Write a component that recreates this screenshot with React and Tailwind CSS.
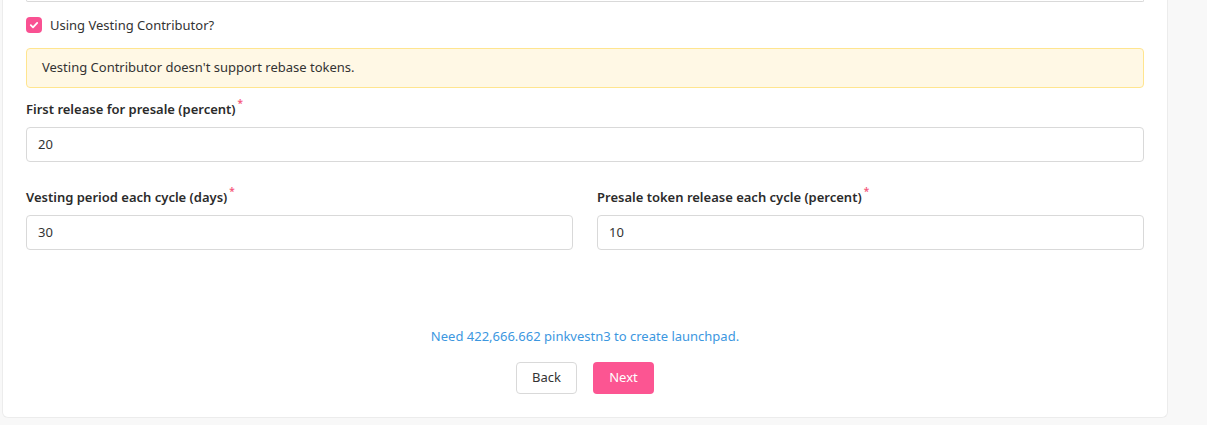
import React, { useState } from 'react';

const Label = ({ children }) => (
    <label className="flex items-start text-[13px] font-semibold text-[#2b2b2b] leading-[20px]">
        {children}
        <span className="ml-[2px] -mt-[3px] text-[10px] text-[#f5587b] leading-[14px]">*</span>
    </label>
);

const Field = ({ label, value }) => (
    <div className="flex flex-col">
        <Label>{label}</Label>
        <div className="mt-[8px] h-[35px] rounded-[4px] border border-[#d9d9d9] bg-white px-[11px] flex items-center text-[13px] text-[#333]">
            {value}
        </div>
    </div>
);

const App = () => {
    const [useVesting, setUseVesting] = useState(true);

    return (
        <div className="w-[1207px] h-[425px] overflow-hidden bg-[#f8f8f8]" style={{ fontFamily: '"Noto Sans", "Open Sans", sans-serif' }}>
            <div className="ml-[2px] w-[1166px] h-[418px] bg-white border-x border-b border-[#ececec] rounded-b-[6px] px-[23px]">
                {/* bottom of previous input */}
                <div className="h-[2px] border-x border-b border-[#d9d9d9] rounded-b-[4px]" />

                <div className="mt-[13px] flex items-center gap-[8px]">
                    <button
                        onClick={() => setUseVesting(!useVesting)}
                        className={`h-[16px] w-[16px] rounded-[4px] flex items-center justify-center ${useVesting ? 'bg-[#f95192]' : 'border border-[#d9d9d9] bg-white'}`}
                    >
                        {useVesting && (
                            <svg width="10" height="10" viewBox="0 0 10 10" fill="none">
                                <path d="M1.8 5.2 L4 7.3 L8.2 2.9" stroke="white" strokeWidth="1.8" strokeLinecap="round" strokeLinejoin="round" />
                            </svg>
                        )}
                    </button>
                    <span className="text-[13px] text-[#333] leading-[20px]">Using Vesting Contributor?</span>
                </div>

                <div className="mt-[13px] h-[40px] rounded-[4px] border border-[#ffe58f] bg-[#fff8e5] px-[15px] flex items-center text-[13px] text-[#333]">
                    Vesting Contributor doesn't support rebase tokens.
                </div>

                <div className="mt-[11px]">
                    <Field label="First release for presale (percent)" value="20" />
                </div>

                <div className="mt-[25px] grid grid-cols-2 gap-[24px]">
                    <Field label="Vesting period each cycle (days)" value="30" />
                    <Field label="Presale token release each cycle (percent)" value="10" />
                </div>

                <p className="mt-[76px] text-center text-[13px] leading-[20px] text-[#3c97df]">
                    Need 422,666.662 pinkvestn3 to create launchpad.
                </p>

                <div className="mt-[16px] flex justify-center gap-[16px]">
                    <button className="h-[32px] w-[61px] rounded-[4px] border border-[#d9d9d9] bg-white text-[13px] text-[#333]">Back</button>
                    <button className="h-[32px] w-[61px] rounded-[4px] bg-[#fc5592] text-[13px] text-white">Next</button>
                </div>
            </div>
        </div>
    );
};

export default App;
